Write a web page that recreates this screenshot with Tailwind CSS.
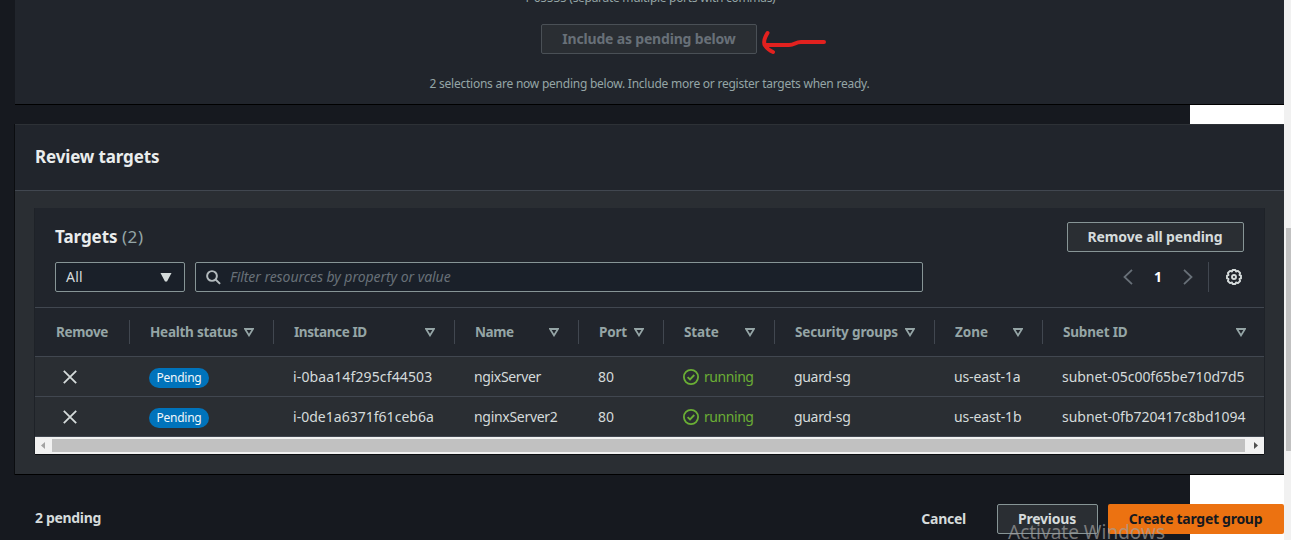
<!DOCTYPE html>
<html lang="en">
<head>
<meta charset="utf-8">
<title>Review targets</title>
<script src="https://cdn.jsdelivr.net/npm/@tailwindcss/browser@4"></script>
</head>
<body class="relative flex h-[540px] w-[1291px] overflow-hidden bg-white font-['Noto_Sans',sans-serif] text-[14px] leading-5 text-[#d5dbdb]">
<svg class="hidden">
  <symbol id="sort" viewBox="0 0 10 9"><path d="M1 1H9L5 7.4Z" fill="none" stroke="#95a5a6" stroke-width="1.8" stroke-linejoin="miter"/></symbol>
  <symbol id="x" viewBox="0 0 14 14"><path d="M.8 .8 13.2 13.2M13.2 .8 .8 13.2" fill="none" stroke="#d5dbdb" stroke-width="1.8"/></symbol>
  <symbol id="ok" viewBox="0 0 16 16"><circle cx="8" cy="8" r="7.1" fill="none" stroke="#6aaf35" stroke-width="1.8"/><path d="M4.6 8.1 7 10.4 11.3 6" fill="none" stroke="#6aaf35" stroke-width="1.8"/></symbol>
</svg>

<div class="h-full w-[1284px] shrink-0 bg-[linear-gradient(to_right,#16191f_1190px,#fff_1190px)]">
  <!-- Target selection -->
  <section class="ml-[15px] flex h-[105px] flex-col items-center border-b border-black bg-[#21252c] text-[12px] text-[#95a5a6]">
    <p class="-mt-[12px] h-5 whitespace-nowrap tracking-[-0.3px]">1-65535 (separate multiple ports with commas)</p>
    <button class="mt-[16px] mr-px flex h-[30px] w-[216px] items-center justify-center rounded-[2px] border border-[#4a5056] bg-[#2a2e33] text-[14px] font-bold tracking-[-0.18px] text-[#687078]">Include as pending below</button>
    <p class="mt-5 h-5 whitespace-nowrap tracking-[-0.24px]">2 selections are now pending below. Include more or register targets when ready.</p>
  </section>

  <!-- Review targets -->
  <section class="mt-[19px] ml-[15px] h-[351px] border-t border-b border-t-[#2d3136] border-b-black bg-[#2a2e33] shadow-[-1px_0_0_#0b0d10]">
    <header class="flex h-[66px] items-center border-b border-[#414750] bg-[#21252c] pb-[2px] pl-5">
      <h2 class="text-[17px] font-bold tracking-[-0.14px] text-[#eaeded]">Review targets</h2>
    </header>
    <div class="mt-[17px] ml-5 w-[1229px] bg-[#21252c] shadow-[-1px_0_0_#1e2228,1px_0_0_#1e2228]">
      <div class="flex h-[54px] items-center justify-between pt-[4px] pr-5 pl-5">
        <h3 class="whitespace-pre text-[17px] font-bold tracking-[-0.05px] text-[#eaeded]">Targets <span class="font-normal tracking-[0.6px] text-[#95a5a6]">(2)</span></h3>
        <button class="flex h-[30px] w-[177px] items-center justify-center rounded-[2px] border border-[#879596] bg-[#2a2e33] pr-px font-bold tracking-[-0.13px]">Remove all pending</button>
      </div>
      <div class="flex h-[45px] pl-5">
        <div class="flex h-[30px] w-[130px] items-center justify-between rounded-[2px] border border-[#879596] bg-[#1a2029] pr-3 pl-[10px] tracking-[0.2px]">All
          <svg class="h-[9px] w-3" viewBox="0 0 12 9"><path d="M.5 0H11.5L7 8.5H5Z" fill="#d5dbdb"/></svg>
        </div>
        <div class="ml-[10px] flex h-[30px] w-[728px] items-center rounded-[2px] border border-[#879596] bg-[#1a2029] pl-[10px]">
          <svg class="h-[15px] w-[15px]" viewBox="0 0 16 16" fill="none" stroke="#b3babd" stroke-width="2.1"><circle cx="6.4" cy="6.4" r="5.2"/><path d="M10.2 10.2 15 14.8"/></svg>
          <span class="ml-[9px] text-[14px] tracking-[-0.05px] text-[#687078] italic">Filter resources by property or value</span>
        </div>
        <div class="ml-[200px] flex h-[30px] items-center">
          <svg class="h-4 w-[10px]" viewBox="0 0 10 16" fill="none" stroke="#687078" stroke-width="1.8"><path d="M9 .8 1.5 8 9 15.2"/></svg>
          <span class="w-[50px] text-center font-bold text-white">1</span>
          <svg class="h-4 w-[10px]" viewBox="0 0 10 16" fill="none" stroke="#687078" stroke-width="1.8"><path d="M1 .8 8.5 8 1 15.2"/></svg>
          <span class="ml-[15px] h-[30px] w-px bg-[#414750]"></span>
          <svg class="ml-[17px] h-4 w-4" viewBox="0 0 16 16" fill="none" stroke="#d5dbdb" stroke-linejoin="round"><path stroke-width="1.9" d="M6.6 1H9.4L10 2.5 12 1.9 14.1 4 13.5 6 15 6.6V9.4L13.5 10 14.1 12 12 14.1 10 13.5 9.4 15H6.6L6 13.5 4 14.1 1.9 12 2.5 10 1 9.4V6.6L2.5 6 1.9 4 4 1.9 6 2.5Z"/><circle cx="8" cy="8" r="2" stroke-width="1.9"/></svg>
        </div>
      </div>

      <!-- Targets table -->
      <div class="grid h-[50px] grid-cols-[95px_144px_181px_124px_85px_111px_160px_108px_221px] items-center border-t border-b border-[#414750] text-[13.5px] font-bold whitespace-nowrap text-[#95a5a6]">
        <div class="flex h-6 items-center border-r border-[#414750] pl-[21px] tracking-[-0.33px]">Remove</div>
        <div class="flex h-6 items-center justify-between border-r border-[#414750] pr-[19px] pl-5 tracking-[-0.25px]">Health status<svg class="h-[9px] w-[10px]"><use href="#sort"/></svg></div>
        <div class="flex h-6 items-center justify-between border-r border-[#414750] pr-[19px] pl-5 tracking-[-0.4px]">Instance ID<svg class="h-[9px] w-[10px]"><use href="#sort"/></svg></div>
        <div class="flex h-6 items-center justify-between border-r border-[#414750] pr-[19px] pl-5 tracking-[-0.43px]">Name<svg class="h-[9px] w-[10px]"><use href="#sort"/></svg></div>
        <div class="flex h-6 items-center justify-between border-r border-[#414750] pr-[19px] pl-5 tracking-[-0.17px]">Port<svg class="h-[9px] w-[10px]"><use href="#sort"/></svg></div>
        <div class="flex h-6 items-center justify-between border-r border-[#414750] pr-[19px] pl-5 tracking-[-0.15px]">State<svg class="h-[9px] w-[10px]"><use href="#sort"/></svg></div>
        <div class="flex h-6 items-center justify-between border-r border-[#414750] pr-[19px] pl-5 tracking-[-0.15px]">Security groups<svg class="h-[9px] w-[10px]"><use href="#sort"/></svg></div>
        <div class="flex h-6 items-center justify-between border-r border-[#414750] pr-[19px] pl-5">Zone<svg class="h-[9px] w-[10px]"><use href="#sort"/></svg></div>
        <div class="flex h-6 items-center justify-between pr-[18px] pl-5 tracking-[-0.17px]">Subnet ID<svg class="h-[9px] w-[10px]"><use href="#sort"/></svg></div>
      </div>
      <div class="grid h-10 grid-cols-[114px_144px_181px_124px_85px_111px_160px_108px_202px] items-center border-b border-[#414750] bg-[#2a2e33] whitespace-nowrap">
        <svg class="ml-7 h-[14px] w-[14px]"><use href="#x"/></svg>
        <span class="mt-[2px] flex h-5 w-[60px] items-center justify-center justify-self-start rounded-full bg-[#0073bb] text-[12px] tracking-[-0.25px] text-[#f2f7fa]">Pending</span>
        <span class="tracking-[0.13px]">i-0baa14f295cf44503</span>
        <span class="tracking-[-0.34px]">ngixServer</span>
        <span>80</span>
        <span class="flex items-center gap-[5px] tracking-[-0.44px] text-[#6aaf35]"><svg class="h-4 w-4"><use href="#ok"/></svg>running</span>
        <span class="tracking-[-0.32px]">guard-sg</span>
        <span class="tracking-[-0.12px]">us-east-1a</span>
        <span class="tracking-[-0.04px]">subnet-05c00f65be710d7d5</span>
      </div>
      <div class="grid h-10 grid-cols-[114px_144px_181px_124px_85px_111px_160px_108px_202px] items-center border-b border-[#414750] bg-[#2a2e33] whitespace-nowrap">
        <svg class="ml-7 h-[14px] w-[14px]"><use href="#x"/></svg>
        <span class="mt-[2px] flex h-5 w-[60px] items-center justify-center justify-self-start rounded-full bg-[#0073bb] text-[12px] tracking-[-0.25px] text-[#f2f7fa]">Pending</span>
        <span class="tracking-[0.02px]">i-0de1a6371f61ceb6a</span>
        <span class="tracking-[-0.3px]">nginxServer2</span>
        <span>80</span>
        <span class="flex items-center gap-[5px] tracking-[-0.44px] text-[#6aaf35]"><svg class="h-4 w-4"><use href="#ok"/></svg>running</span>
        <span class="tracking-[-0.32px]">guard-sg</span>
        <span class="tracking-[-0.1px]">us-east-1b</span>
        <span>subnet-0fb720417c8bd1094</span>
      </div>
      <div class="flex h-[17px] items-center bg-[#f1f1f1] shadow-[0_1px_0_#0b0d10]">
        <svg class="h-[17px] w-[17px]" viewBox="0 0 17 17"><path d="M10 5V12L6 8.5Z" fill="#a3a3a3"/></svg>
        <div class="h-[13px] w-[1193px] bg-[#c1c1c1]"></div>
        <svg class="ml-[2px] h-[17px] w-[17px]" viewBox="0 0 17 17"><path d="M7 5V12L11 8.5Z" fill="#505050"/></svg>
      </div>
    </div>
  </section>

  <!-- Page actions -->
  <footer class="mt-[29px] flex h-[30px] items-center pl-[35px] font-bold">
    <span class="pb-[2px] tracking-[-0.33px]">2 pending</span>
    <button class="ml-auto tracking-[-0.25px]">Cancel</button>
    <button class="ml-[31px] flex h-[30px] w-[101px] items-center justify-center rounded-[2px] border border-[#879596] bg-[#2a2e33] pr-px tracking-[-0.23px]">Previous</button>
    <button class="ml-[10px] flex h-[30px] w-[176px] items-center justify-center rounded-[2px] bg-[#ec7211] pr-px tracking-[-0.28px] text-[#16191f]">Create target group</button>
  </footer>
</div>

<!-- Page scrollbar -->
<div class="h-full w-[7px] bg-[#f1f1f1] pt-[228px] pl-[2px]"><div class="h-[223px] bg-[#c1c1c1]"></div></div>

<!-- Arrow annotation -->
<svg class="absolute top-[28px] left-[758px] h-[30px] w-[72px]" viewBox="0 0 72 30" fill="none" stroke="#e2211f" stroke-width="4" stroke-linecap="round" stroke-linejoin="round"><path d="M9.500 5Q4.500 13 7 17.500Q10 22 15 24"/><path d="M8 17H31Q34 17 37 15.500T43 14H66"/></svg>
<!-- Windows watermark -->
<div class="absolute top-[519px] left-[1008px] text-[19px] leading-[26px] whitespace-nowrap text-[#a0a0a0]/70">Activate Windows</div>
</body>
</html>
